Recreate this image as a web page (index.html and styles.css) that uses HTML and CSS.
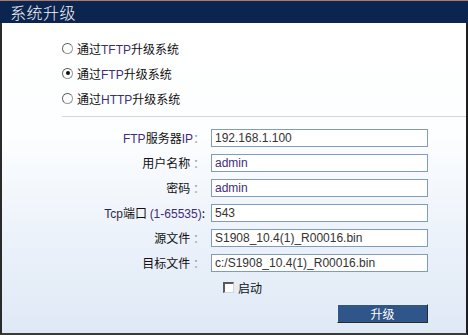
FILE: index.html
```html
<!DOCTYPE html>
<html>
<head>
<meta charset="utf-8">
<link rel="stylesheet" href="styles.css">
</head>
<body>
<div class="panel">
  <div class="header"><span class="title">系统升级</span></div>
  <div class="content">
    <div class="modes">
      <label class="mode"><input type="radio" name="m" class="radio"><span>通过<span class="en">TFTP</span>升级系统</span></label>
      <label class="mode"><input type="radio" name="m" class="radio" checked><span>通过<span class="en">FTP</span>升级系统</span></label>
      <label class="mode"><input type="radio" name="m" class="radio"><span>通过<span class="en">HTTP</span>升级系统</span></label>
    </div>
    <div class="sep"></div>
    <div class="form">
      <div class="lbl"><span class="en">FTP</span>服务器<span class="en">IP</span><span class="colon">：</span></div>
      <div class="field"><span class="val">192.168.1.100</span></div>
      <div class="lbl">用户名称<span class="colon"> ：</span></div>
      <div class="field"><span class="val en">admin</span></div>
      <div class="lbl">密码<span class="colon"> ：</span></div>
      <div class="field"><span class="val en">admin</span></div>
      <div class="lbl"><span class="en2">Tcp</span>端口 <span class="en">(1-65535)</span>:</div>
      <div class="field"><span class="val">543</span></div>
      <div class="lbl">源文件<span class="colon"> ：</span></div>
      <div class="field"><span class="val">S1908_10.4(1)_R00016.bin</span></div>
      <div class="lbl">目标文件<span class="colon"> ：</span></div>
      <div class="field"><span class="val">c:/S1908_10.4(1)_R00016.bin</span></div>
      <div></div>
      <label class="start"><span class="check"></span><span>启动</span></label>
      <div></div>
      <div class="actions"><button class="btn">升级</button></div>
    </div>
  </div>
</div>
</body>
</html>
```
FILE: styles.css
```css
html, body {
  margin: 0;
  padding: 0;
  background: #ffffff;
}
body {
  width: 468px;
  height: 335px;
  overflow: hidden;
  font-family: "Noto Sans CJK SC", "Liberation Sans", sans-serif;
  font-size: 12px;
  color: #111;
}
.panel {
  width: 468px;
  height: 335px;
  display: flex;
  flex-direction: column;
  box-sizing: border-box;
}
.header {
  height: 23px;
  box-sizing: border-box;
  border-top: 1px solid #a77b68;
  background: #0c2550;
  padding-left: 10px;
  display: flex;
  align-items: center;
}
.title {
  color: #f2f4f8;
  font-size: 16px;
  font-weight: 300;
  line-height: 18px;
  letter-spacing: 0.5px;
}
.content {
  flex: 1;
  border-left: 2px solid #2a2a2a;
  border-right: 2px solid #1e1e1e;
  border-bottom: 2px solid #3a3a3a;
  background: linear-gradient(to bottom, #ffffff 0%, #fdfeff 35%, #e9f0f9 75%, #dfe9f6 100%);
  display: flex;
  flex-direction: column;
}
.modes {
  display: flex;
  flex-direction: column;
  padding: 16px 0 0 60px;
  gap: 7px;
}
.mode {
  display: flex;
  align-items: center;
  height: 18px;
  gap: 4px;
  font-size: 12px;
}
.en { color: #3f2d7a; font-family: "Liberation Sans", sans-serif; }
.en2 { color: #2a2a4a; font-family: "Liberation Sans", sans-serif; }
.radio {
  appearance: none;
  -webkit-appearance: none;
  margin: 0;
  width: 11px;
  height: 11px;
  border-radius: 50%;
  border: 1px solid #9a9a9a;
  border-top-color: #555;
  border-left-color: #666;
  background: #fff;
  position: relative;
}
.radio:checked::after {
  content: "";
  position: absolute;
  left: 2.5px;
  top: 2.5px;
  width: 4px;
  height: 4px;
  border-radius: 50%;
  background: #111;
}
.sep {
  margin: 9px 0 0 60px;
  height: 1px;
  background: #d6d6d6;
}
.form {
  display: grid;
  grid-template-columns: 203px 217px;
  column-gap: 6px;
  row-gap: 7px;
  margin-top: 12px;
  align-items: center;
}
.lbl {
  text-align: right;
  white-space: nowrap;
  height: 18px;
  line-height: 18px;
  font-size: 12px;
}
.colon { color: #999; }
.field {
  height: 18px;
  box-sizing: border-box;
  border: 1px solid #7f9db9;
  background: #fff;
  padding-left: 3px;
  display: flex;
  align-items: center;
  font-family: "Liberation Sans", sans-serif;
  font-size: 12px;
  color: #333;
}
.start {
  display: flex;
  align-items: center;
  gap: 4px;
  height: 16px;
  padding-left: 12px;
  margin-top: 0px;
}
.check {
  width: 11px;
  height: 11px;
  box-sizing: border-box;
  border: 1px solid #d4d4d4;
  border-top: 2px solid #5a5a5a;
  border-left: 2px solid #5a5a5a;
  background: #fff;
}
.actions {
  display: flex;
  justify-content: flex-end;
  margin-top: 2px;
}
.btn {
  width: 91px;
  height: 19px;
  box-sizing: border-box;
  border: 1px solid #2b2b2b;
  border-top-color: #e8eef6;
  border-left-color: #e8eef6;
  background: #305689;
  color: #fff;
  font-family: "Noto Sans CJK SC", sans-serif;
  font-size: 12px;
  padding: 0;
  line-height: 16px;
}
```
